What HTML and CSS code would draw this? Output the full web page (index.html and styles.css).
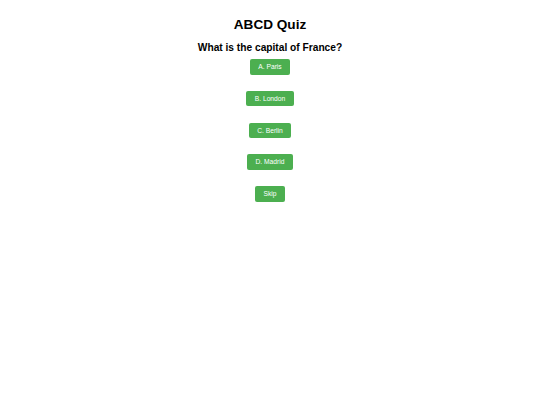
FILE: index.html
```html
<!DOCTYPE html>
<html>
<head>
<meta charset="utf-8">
<link rel="stylesheet" href="styles.css">
</head>
<body>
<div class="quiz">
  <h1 class="title">ABCD Quiz</h1>
  <h2 class="question">What is the capital of France?</h2>
  <div class="options">
    <button class="btn">A. Paris</button>
    <button class="btn">B. London</button>
    <button class="btn">C. Berlin</button>
    <button class="btn">D. Madrid</button>
    <button class="btn">Skip</button>
  </div>
</div>
</body>
</html>
```

FILE: styles.css
```css
html, body {
  margin: 0;
  padding: 0;
  background: #ffffff;
}
body {
  font-family: "Liberation Sans", Arial, sans-serif;
  color: #000000;
}
.quiz {
  display: flex;
  flex-direction: column;
  align-items: center;
  padding-top: 16.5px;
}
.title {
  margin: 0;
  font-size: 13.6px;
  line-height: 16px;
  font-weight: bold;
}
.question {
  margin: 9px 0 0 0;
  font-size: 10.2px;
  line-height: 12px;
  font-weight: bold;
}
.options {
  display: flex;
  flex-direction: column;
  align-items: center;
  gap: 16.3px;
  margin-top: 5.5px;
}
.btn {
  font-family: "Liberation Sans", Arial, sans-serif;
  font-size: 6.7px;
  height: 15.5px;
  line-height: 15.5px;
  padding: 0 8.5px;
  margin: 0;
  border: none;
  border-radius: 2px;
  background: #4caf50;
  color: #ffffff;
  cursor: pointer;
}
```
